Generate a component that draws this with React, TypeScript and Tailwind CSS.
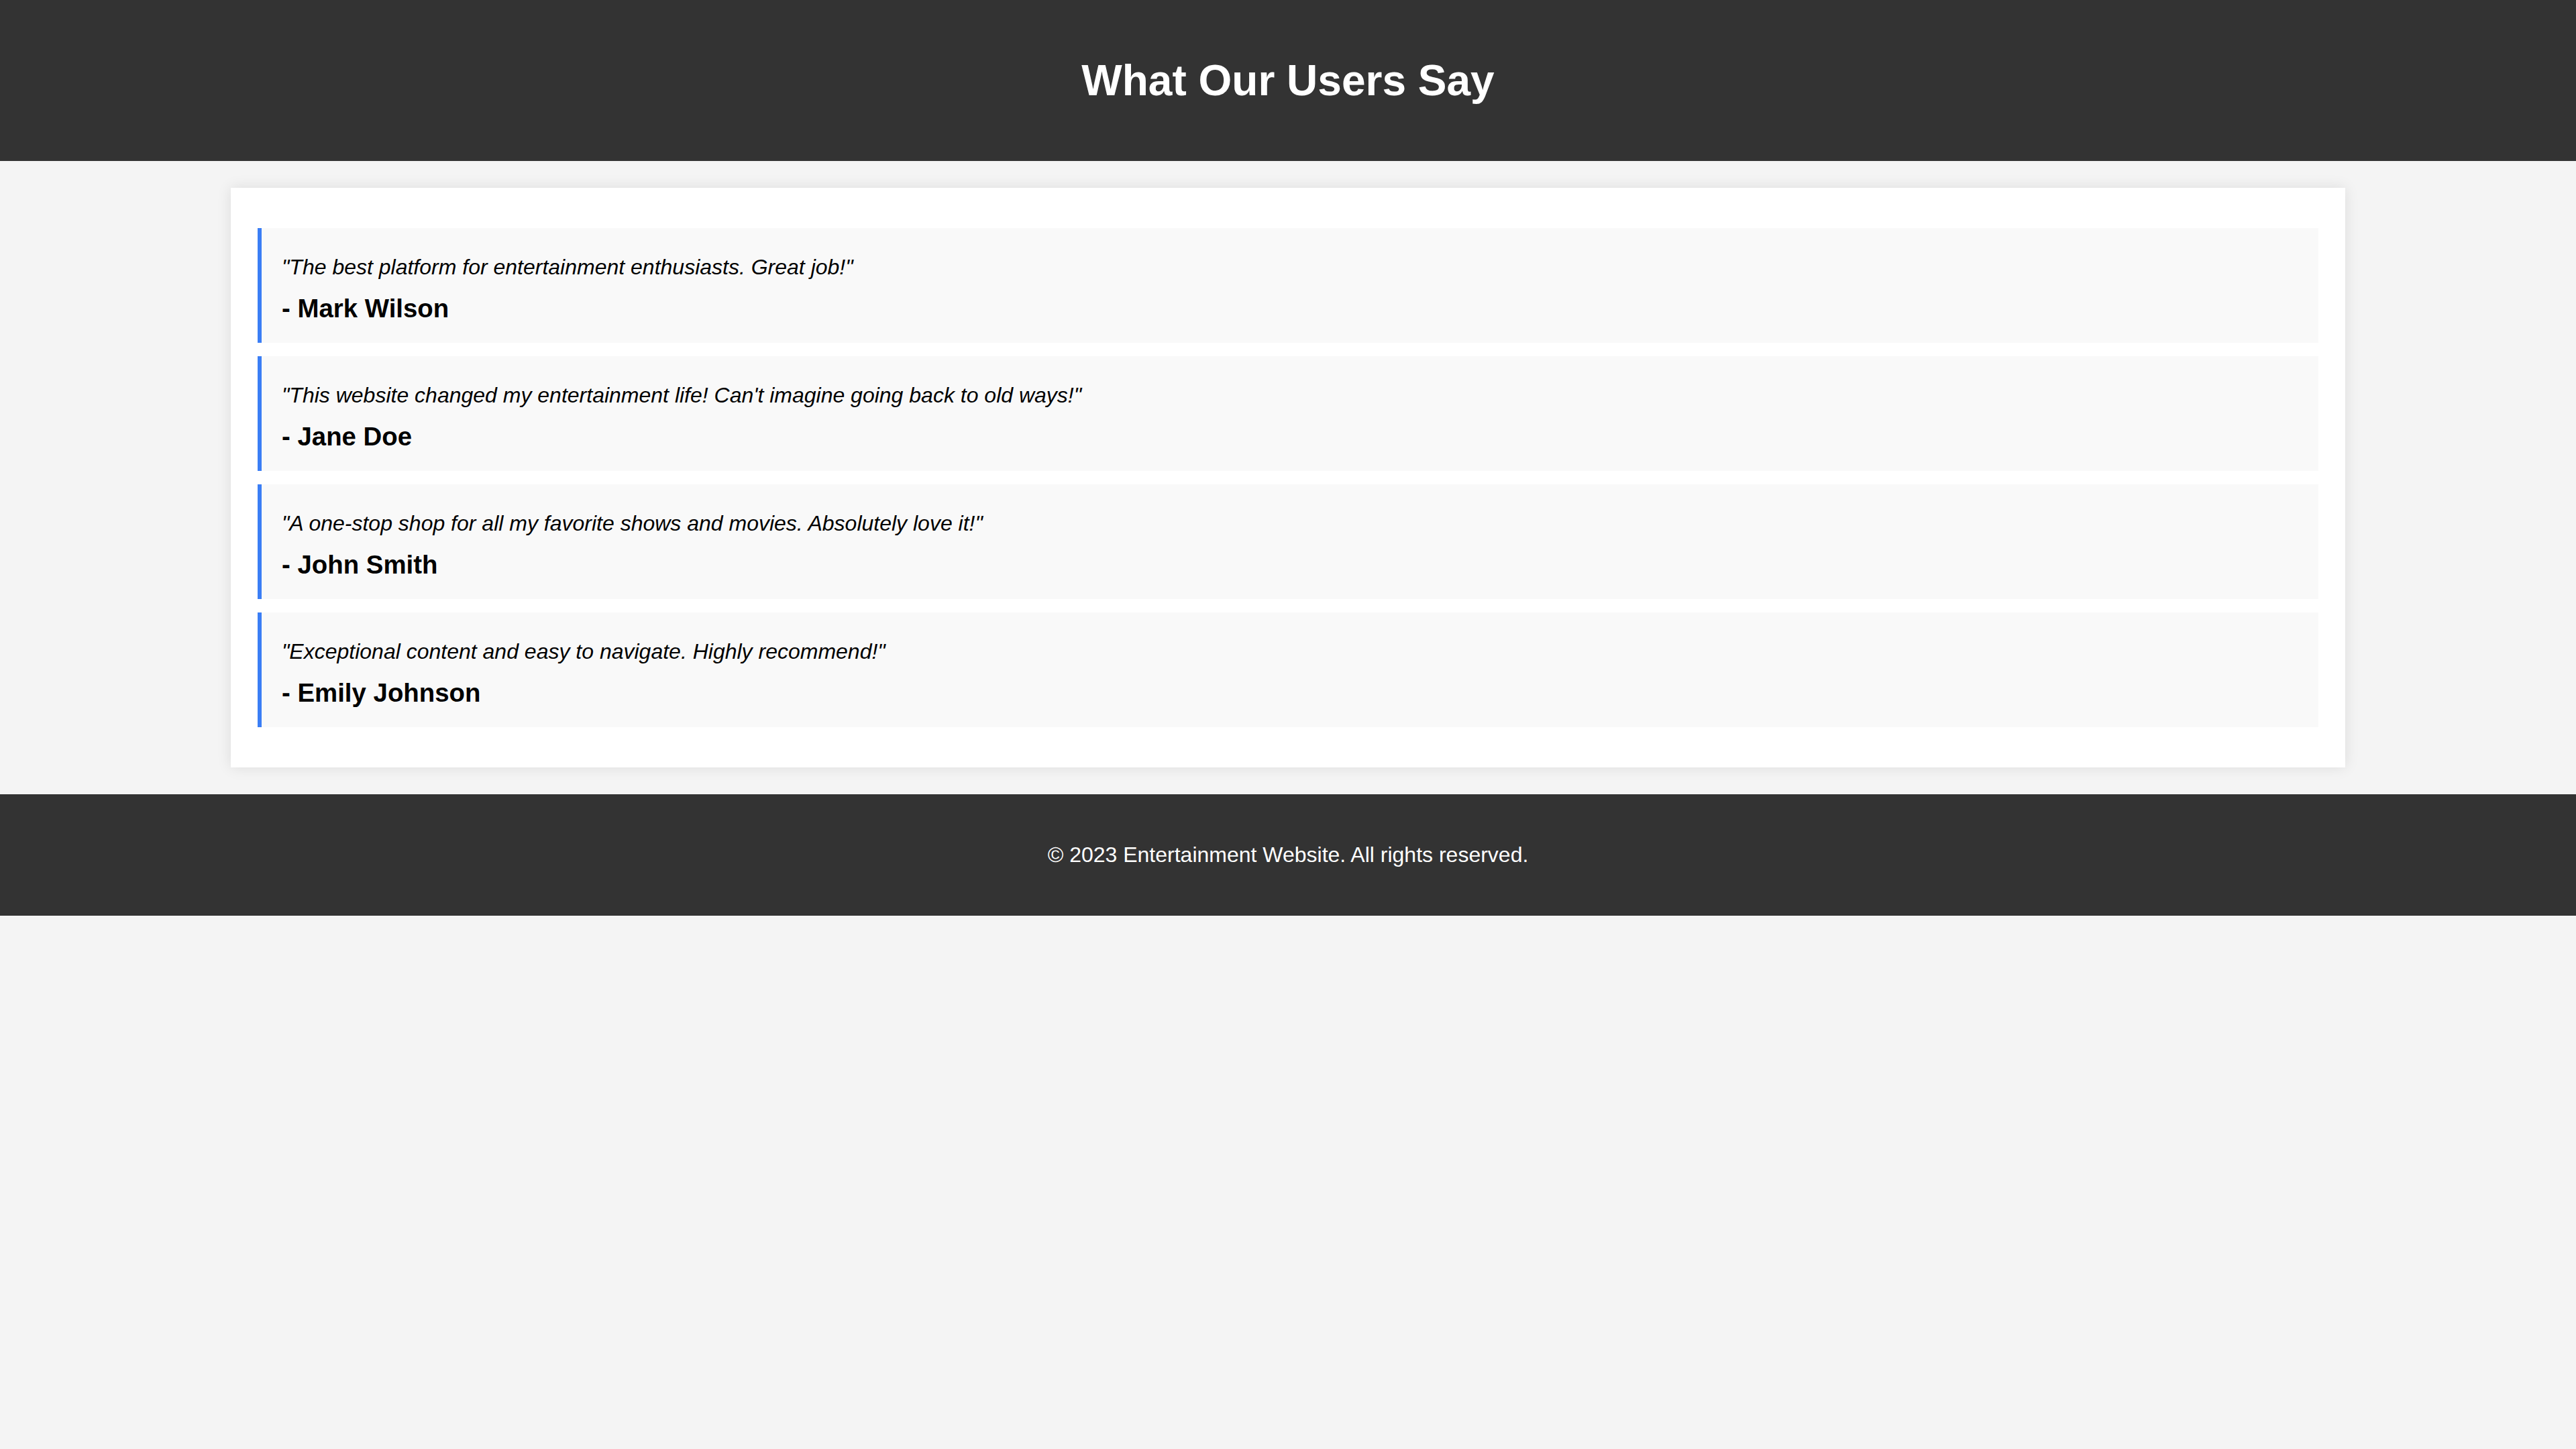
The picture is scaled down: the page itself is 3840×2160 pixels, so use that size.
import React from 'react';

const testimonials = [
  {
    quote: '"The best platform for entertainment enthusiasts. Great job!"',
    author: '- Mark Wilson'
  },
  {
    quote: '"This website changed my entertainment life! Can\'t imagine going back to old ways!"',
    author: '- Jane Doe'
  },
  {
    quote: '"A one-stop shop for all my favorite shows and movies. Absolutely love it!"',
    author: '- John Smith'
  },
  {
    quote: '"Exceptional content and easy to navigate. Highly recommend!"',
    author: '- Emily Johnson'
  }
];

const App = () => {
  return (
    <div className="min-h-screen bg-[#f4f4f4] font-['Liberation_Sans',Arial,sans-serif] text-black">
      <header className="bg-[#333333] py-[83px] text-center text-white">
        <h1 className="text-[64px] font-bold leading-[74px]">What Our Users Say</h1>
      </header>

      <main className="mx-auto mt-[40px] box-content w-4/5 bg-white p-[40px] shadow-[0_0_20px_rgba(0,0,0,0.1)]">
        <div className="flex flex-col gap-[20px] py-[20px]">
          {testimonials.map((item, index) => (
            <div
              key={index}
              className="border-l-[6px] border-[#3b7ef5] bg-[#f9f9f9] pt-[40px] pb-[29px] pl-[30px] pr-[30px]"
            >
              <p className="text-[32px] italic leading-[37px]">{item.quote}</p>
              <p className="mt-[21px] text-[38.4px] font-bold leading-[44px]">{item.author}</p>
            </div>
          ))}
        </div>
      </main>

      <footer className="mt-[40px] bg-[#333333] py-[72px] text-center text-white">
        <p className="text-[32px] leading-[37px]">© 2023 Entertainment Website. All rights reserved.</p>
      </footer>
    </div>
  );
};

export default App;
